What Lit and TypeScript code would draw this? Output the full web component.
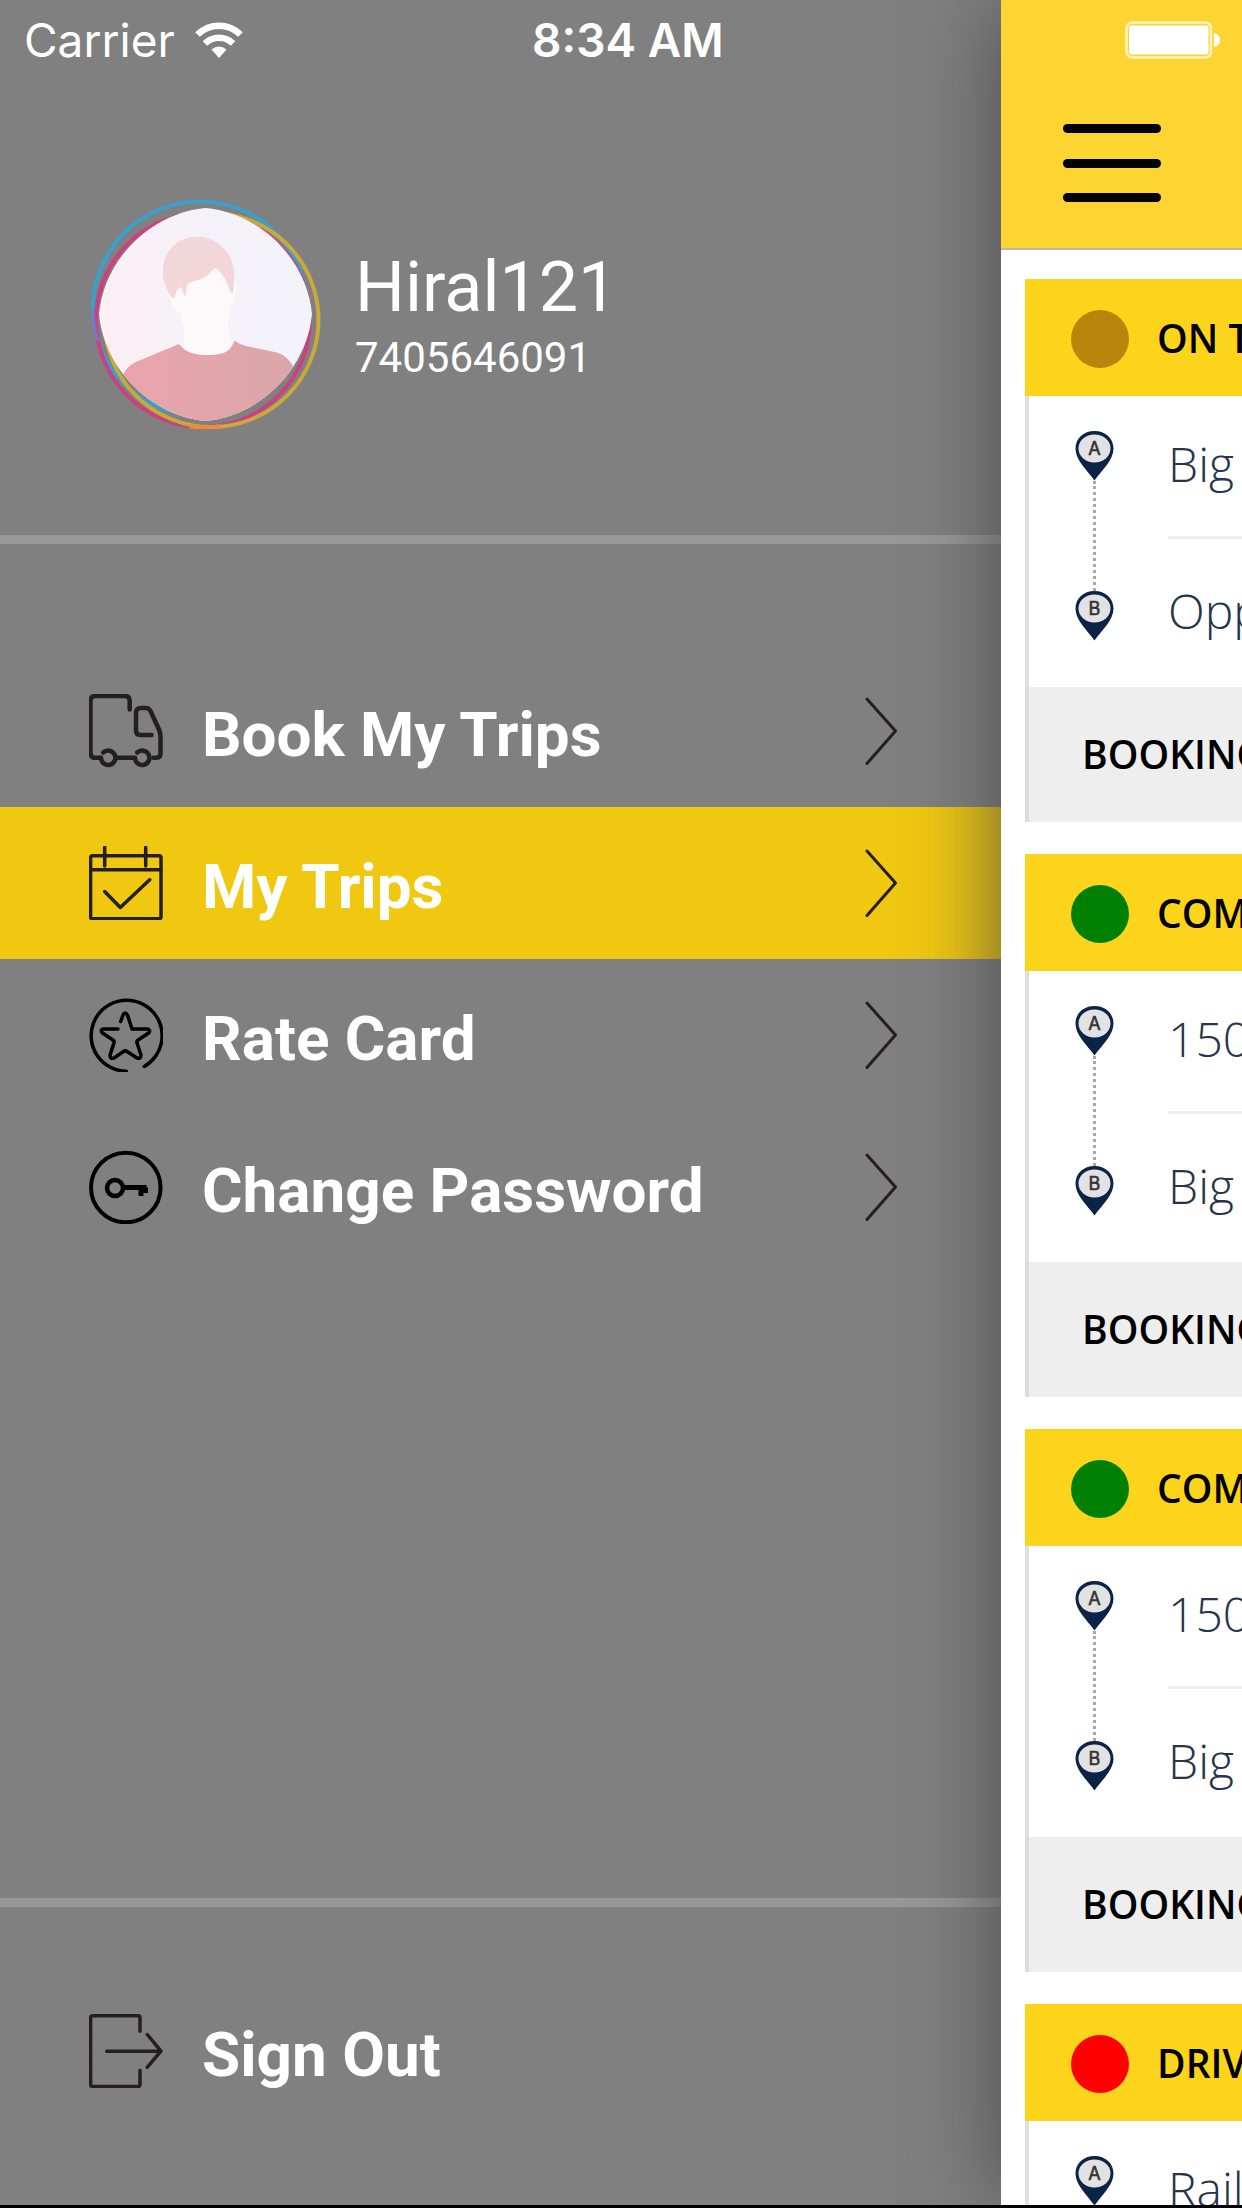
import { LitElement, html, svg, css } from "lit";
import { customElement, property } from "lit/decorators.js";
import { classMap } from "lit/directives/class-map.js";

const icons = {
  truck: svg`
    <path stroke-width="4.500" d="M40.7 15.5V7q0-5-5-5H6.500q-5 0-5 5v51.800q0 5 5 5h5.500"/>
    <path stroke-width="4.500" d="M14.300 58.500a7.200 7.200 0 1 1-2.300 5.300M48.300 58.500a7.200 7.200 0 1 1-2.300 5.300M29 63.800h17"/>
    <path stroke-width="4.500" d="M64.500 63.800h3q4 0 4-4V42q0-3-1.500-6.500L61.500 17q-1.500-3-4.500-3h-5q-5 0-5 5v17.500q0 4.500 4.500 4.500h11"/>`,
  calendar: svg`
    <rect x="1.600" y="9.800" width="70.400" height="63" rx="2"/>
    <path d="M1.600 23.800h70.400M15.700 1.500v18.500M56.700 1.500v18.500M15.700 45.500l15.600 16 29.400-27.700"/>`,
  star: svg`
    <path stroke="#000" d="M37.300 73.200A35.500 35.500 0 1 1 55.300 68.500"/>
    <path stroke="#000" d="M31.700 23.500l2.300-6.500q2.200-4 4.500 0l4.500 14h15.500q3.500 1 1.200 4l-11 7.300q-1.200 1-.7 2.500l4 12.500q-.3 4-4 2.700l-10-6.500q-1.700-1.300-3.500 0L25 60q-4 1.200-4-2.700l4-12.500q.5-1.500-.7-2.500L13.500 35q-2.700-3 .7-4H29"/>`,
  key: svg`
    <circle stroke="#000" stroke-width="4" cx="36.800" cy="37.500" r="34.800"/>
    <circle stroke="#000" stroke-width="4.500" cx="26" cy="38" r="8"/>
    <path stroke="#000" stroke-width="5" stroke-linecap="butt" d="M33.500 37.500H57.500M52 37.500v8.500M56.500 37.500v5.500"/>`,
  exit: svg`
    <path d="M51 17.200V3.800q0-2-2-2H3.600q-2 0-2 2v66.700q0 2 2 2H49q2 0 2-2V56.200M17.700 37.200H72M58.300 20.500L72 37.200 58.300 53.200"/>`,
};

type IconName = keyof typeof icons;

const drawIcon = (name: IconName) => html`
  <svg class="icon" viewBox="0 0 74 74" aria-hidden="true">${icons[name]}</svg>
`;

interface MenuEntry {
  label: string;
  icon: IconName;
  active?: boolean;
}

const menu: MenuEntry[] = [
  { label: "Book My Trips", icon: "truck" },
  { label: "My Trips", icon: "calendar", active: true },
  { label: "Rate Card", icon: "star" },
  { label: "Change Password", icon: "key" },
];

interface Trip {
  status: string;
  tone: "pending" | "done" | "alert";
  from: string;
  to: string;
}

const trips: Trip[] = [
  { status: "ON T", tone: "pending", from: "Big", to: "Opp" },
  { status: "COM", tone: "done", from: "150", to: "Big" },
  { status: "COM", tone: "done", from: "150", to: "Big" },
  { status: "DRIV", tone: "alert", from: "Rail", to: "" },
];

@customElement("user-avatar")
export class UserAvatar extends LitElement {
  static styles = css`
    :host {
      display: block;
      flex: none;
    }
    .portrait {
      display: block;
      width: 230px;
      height: 230px;
    }
  `;

  render() {
    return html`
      <svg class="portrait" viewBox="0 0 230 230" role="img" aria-label="Profile photo">
        <defs>
          <linearGradient id="backdrop">
            <stop offset="0" stop-color="#fdeff5" />
            <stop offset=".4" stop-color="#f6f1f8" />
            <stop offset="1" stop-color="#f3f3fa" />
          </linearGradient>
          <linearGradient id="shirt">
            <stop offset="0" stop-color="#eba3ad" />
            <stop offset="1" stop-color="#d9a7ab" />
          </linearGradient>
          <clipPath id="frame">
            <path d="M114.500 9C169 14 216 60 221 115C216 170 169 217 114.500 222C60 217 13 170 8 115C13 60 60 14 114.500 9Z" />
          </clipPath>
        </defs>
        <g fill="none" stroke-width="4">
          <circle cx="109" cy="109.500" r="107" stroke="#3a9fcb" />
          <circle cx="112" cy="121" r="107" stroke="#cc3f83" />
          <circle cx="120.500" cy="121" r="107" stroke="#c9a93a" />
          <path d="M99 227.300Q114 230 130 227" stroke="#ee8a3a" />
          <path d="M2 112Q2.500 128 7 142" stroke="#7a76c4" stroke-width="3" />
        </g>
        <g clip-path="url(#frame)">
          <rect width="230" height="230" fill="url(#backdrop)" />
          <path fill="#fdf9fa" d="M76 80L80 103Q82 112 88 112L93 128V146L90 160H144L140 144L136.700 126L140 106Q145 104 145.500 84L130 60H90Z" />
          <path fill="url(#shirt)" d="M88 145L45 163Q36 167 32 176L20 230H220L203 169Q197 157 186 153.500L155 147Q148 145 143.600 141.700C140 149 138 156 117 156C98 156 92 150 88 145Z" />
          <path fill="#f3d6da" d="M76.600 91C72 83 71 76 72 68C75 49 88 38 105 37.700C120 37 132 46 138 56C143 64 145 78 141.600 95C137 90 136 80 131 76C129 73 127 69 124.400 69.300C121 70 119 75 116 76.500C112 80 108 81 105 81.500C101 83 97 84 96 87L94.600 97.700C92 94 91 90 90 87.700L86 91L83 100C80 98 78 95 76.600 91Z" />
        </g>
      </svg>
    `;
  }
}

@customElement("side-menu")
export class SideMenu extends LitElement {
  static styles = css`
    :host {
      display: flex;
      flex-direction: column;
      background: #808080;
      color: #fff;
      font-family: Roboto, "Liberation Sans", sans-serif;
    }
    .status {
      display: grid;
      grid-template-columns: 52% auto;
      align-items: center;
      height: 80px;
      padding-left: 24px;
      font: 400 46px/80px Inter, "Liberation Sans", sans-serif;
    }
    .carrier {
      display: flex;
      align-items: center;
      gap: 20px;
    }
    .wifi {
      width: 48px;
      height: 36px;
    }
    .clock {
      font-weight: 600;
    }
    .profile {
      display: flex;
      align-items: center;
      gap: 34px;
      padding: 119px 40px 106px 91px;
      border-bottom: 9px solid #989898;
    }
    .identity {
      padding-top: 2px;
    }
    .name {
      margin: 0;
      font-size: 70px;
      font-weight: 400;
      line-height: 86px;
    }
    .phone {
      margin: 0;
      font-size: 42px;
      line-height: 56px;
    }
    .menu {
      flex: 1;
      padding-top: 111px;
    }
    .row {
      display: flex;
      align-items: center;
      gap: 39px;
      box-sizing: border-box;
      width: 100%;
      height: 152px;
      padding: 0 104px 0 89px;
      border: 0;
      background: none;
      color: inherit;
      font: 700 62px/76px Roboto, "Liberation Sans", sans-serif;
      text-align: left;
      text-decoration: none;
    }
    .row.active {
      background: #f0c811;
    }
    .icon {
      flex: none;
      width: 74px;
      height: 74px;
      fill: none;
      stroke: #231f20;
      stroke-width: 3.5;
      stroke-linecap: round;
      stroke-linejoin: round;
    }
    .label {
      flex: 1;
      padding-top: 8px;
      white-space: nowrap;
    }
    .chevron {
      flex: none;
      width: 32px;
      height: 68px;
      fill: none;
      stroke: #231f20;
      stroke-width: 3;
      stroke-linecap: round;
      stroke-linejoin: round;
    }
    .footer {
      padding: 68px 0 78px;
      border-top: 9px solid #989898;
    }
  `;

  render() {
    return html`
      <div class="status">
        <span class="carrier">
          Carrier
          <svg class="wifi" viewBox="0 0 48 36" role="img" aria-label="Wi-Fi">
            <g fill="none" stroke="#fff" stroke-width="6.500">
              <path d="M2.500 12.500a30.500 30.500 0 0 1 43 0" />
              <path d="M10 21.500a20 20 0 0 1 28 0" />
            </g>
            <path fill="#fff" d="M24 36l-7.500-8.500q7.500-6 15 0z" />
          </svg>
        </span>
        <span class="clock">8:34 AM</span>
      </div>
      <header class="profile">
        <user-avatar></user-avatar>
        <div class="identity">
          <h1 class="name">Hiral121</h1>
          <p class="phone">7405646091</p>
        </div>
      </header>
      <nav class="menu">
        ${menu.map(
          (entry) => html`
            <a class=${classMap({ row: true, active: !!entry.active })} href="#">
              ${drawIcon(entry.icon)}
              <span class="label">${entry.label}</span>
              <svg class="chevron" viewBox="0 0 32 68" aria-hidden="true">
                <path d="M2 2L30.500 34L2 66.500" />
              </svg>
            </a>
          `
        )}
      </nav>
      <div class="footer">
        <button class="row" type="button">
          ${drawIcon("exit")}
          <span class="label">Sign Out</span>
        </button>
      </div>
    `;
  }
}

@customElement("trip-card")
export class TripCard extends LitElement {
  @property({ attribute: false }) trip!: Trip;

  static styles = css`
    :host {
      display: block;
      font-family: "Open Sans", "Noto Sans", sans-serif;
      white-space: nowrap;
      overflow: hidden;
    }
    .head {
      display: flex;
      align-items: center;
      gap: 28px;
      box-sizing: border-box;
      height: 117px;
      padding: 3px 0 0 46px;
      background: #fdd41c;
    }
    .dot {
      flex: none;
      width: 58px;
      height: 58px;
      border-radius: 50%;
    }
    .pending {
      background: #b8860b;
    }
    .done {
      background: #008000;
    }
    .alert {
      background: #ff0000;
    }
    .title {
      margin: 0;
      padding-bottom: 2px;
      color: #000;
      font-size: 39px;
      font-weight: 600;
      line-height: 54px;
    }
    .body {
      display: flex;
      gap: 54px;
      box-sizing: border-box;
      height: 291px;
      padding-left: 46px;
      border-left: 4px solid #e0e0e0;
      background: #fff;
    }
    .route {
      display: flex;
      flex: none;
      flex-direction: column;
      align-items: center;
      width: 39px;
      padding: 35px 0 46px;
    }
    .pin {
      flex: none;
      width: 39px;
      height: 50px;
    }
    .letter {
      font: 400 18px Inter, "Liberation Sans", sans-serif;
      fill: #333;
      stroke: #333;
      stroke-width: 0.6;
    }
    .trail {
      flex: 1;
      border-left: 3px dotted #a8a8a8;
    }
    .stops {
      display: flex;
      flex: 1;
      flex-direction: column;
      color: #26354b;
      font-size: 48px;
      font-weight: 300;
      line-height: 66px;
    }
    .stop {
      display: flex;
      flex: 1;
      align-items: center;
      box-sizing: border-box;
      margin: 0;
      padding-bottom: 4px;
    }
    .stop:first-child {
      flex: none;
      height: 143px;
      border-bottom: 3px solid #eee;
    }
    .foot {
      display: flex;
      align-items: center;
      box-sizing: border-box;
      height: 135px;
      padding-left: 53px;
      border-left: 4px solid #dcdcdc;
      background: #eee;
    }
  `;

  private pin(letter: string) {
    return html`
      <svg class="pin" viewBox="0 0 39 50" aria-hidden="true">
        <path fill="#0b2346" d="M19.500 0C8.500 0 .5 7.500 .5 17.500C.5 29 12 39 19.500 49.500C27 39 38.500 29 38.500 17.500C38.500 7.500 30.500 0 19.500 0Z" />
        <ellipse cx="19.500" cy="17.500" rx="16" ry="14" fill="#e2e2e2" />
        <text class="letter" x="19.500" y="23.500" text-anchor="middle">${letter}</text>
      </svg>
    `;
  }

  render() {
    const { status, tone, from, to } = this.trip;
    return html`
      <div class="head">
        <span class=${classMap({ dot: true, [tone]: true })}></span>
        <h2 class="title">${status}</h2>
      </div>
      <div class="body">
        <div class="route">
          ${this.pin("A")}
          <span class="trail"></span>
          ${this.pin("B")}
        </div>
        <div class="stops">
          <p class="stop">${from}</p>
          <p class="stop">${to}</p>
        </div>
      </div>
      <div class="foot"><p class="title">BOOKING</p></div>
    `;
  }
}

@customElement("trip-panel")
export class TripPanel extends LitElement {
  static styles = css`
    :host {
      display: flex;
      flex-direction: column;
      background: #fff;
    }
    .bar {
      display: flex;
      flex: none;
      flex-direction: column;
      align-items: flex-start;
      box-sizing: border-box;
      height: 250px;
      background: #fcd532;
      border-bottom: 2px solid #b9b7a6;
    }
    .battery {
      align-self: flex-end;
      width: 96px;
      height: 38px;
      margin: 21px 21px 65px 0;
    }
    .toggle {
      display: flex;
      flex-direction: column;
      justify-content: space-between;
      width: 98px;
      height: 78px;
      margin-left: 62px;
      padding: 0;
      border: 0;
      background: none;
    }
    .line {
      display: block;
      height: 9px;
      border-radius: 5px;
      background: #000;
    }
    .list {
      display: flex;
      flex: 1;
      flex-direction: column;
      gap: 32px;
      min-height: 0;
      padding: 29px 0 0 24px;
      overflow: hidden;
    }
    .card {
      flex: none;
    }
  `;

  render() {
    return html`
      <header class="bar">
        <svg class="battery" viewBox="0 0 96 38" role="img" aria-label="Battery full">
          <rect x="1.500" y="1.500" width="84.500" height="35" rx="6" fill="none" stroke="#fff3c4" stroke-width="2.500" />
          <rect x="4" y="4.500" width="79.500" height="29" rx="3" fill="#fff" />
          <path fill="#fff" d="M89 12q6 1.500 6 7t-6 7z" />
        </svg>
        <button class="toggle" type="button" aria-label="Menu">
          <span class="line"></span>
          <span class="line"></span>
          <span class="line"></span>
        </button>
      </header>
      <main class="list">
        ${trips.map((trip) => html`<trip-card class="card" .trip=${trip}></trip-card>`)}
      </main>
    `;
  }
}

@customElement("app-root")
export class AppRoot extends LitElement {
  static styles = css`
    :host {
      display: flex;
      flex-direction: column;
      height: 100vh;
      overflow: hidden;
    }
    .stage {
      display: grid;
      flex: 1;
      grid-template-columns: 80.6% minmax(0, 1fr);
      min-height: 0;
      overflow: hidden;
    }
    .drawer,
    .panel {
      min-width: 0;
      min-height: 0;
    }
    .panel {
      z-index: 1;
      box-shadow: 0 0 90px rgba(68, 68, 68, 0.86);
    }
    .edge {
      flex: none;
      height: 3px;
      background: #000;
    }
  `;

  render() {
    return html`
      <div class="stage">
        <side-menu class="drawer"></side-menu>
        <trip-panel class="panel"></trip-panel>
      </div>
      <div class="edge"></div>
    `;
  }
}
